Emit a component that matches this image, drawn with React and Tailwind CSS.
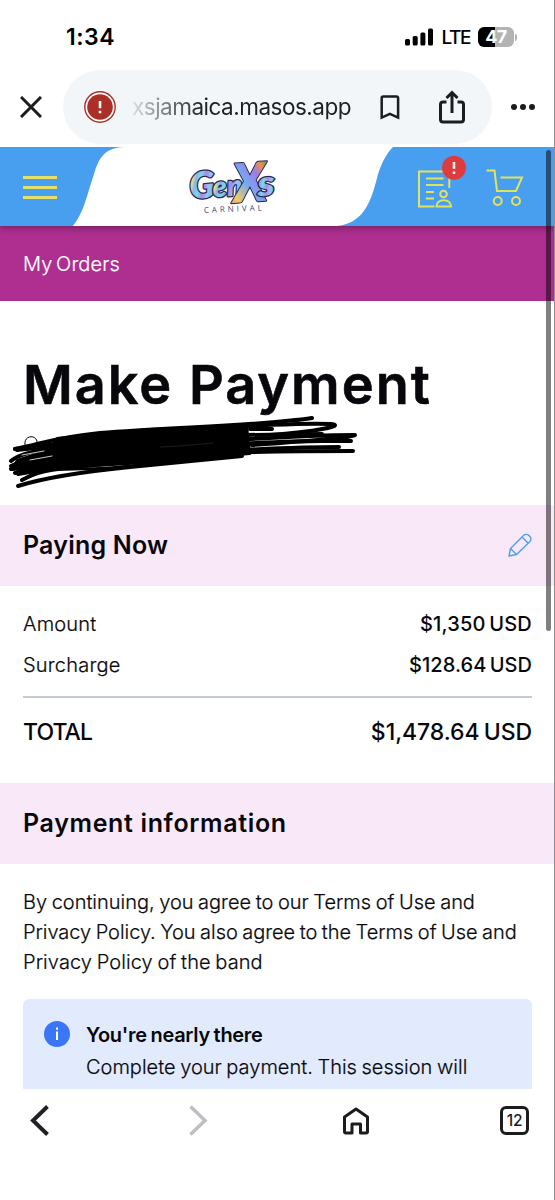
import React from 'react';

const charges = [
  { label: 'Amount', value: '$1,350 USD', labelClass: 'tracking-[0.2px]', valueClass: 'tracking-[0.2px]' },
  { label: 'Surcharge', value: '$128.64 USD', labelClass: 'tracking-[0.2px]', valueClass: 'tracking-[0.05px]' },
];

const StatusBar = () => (
  <div className="flex h-[70px] shrink-0 items-start justify-between pl-[66px] pr-[38px] pt-[23px]">
    <span className="text-[23px] font-semibold leading-[29px] tracking-[0.5px] text-black">1:34</span>
    <div className="flex h-[28px] items-center">
      <svg width="28" height="18" viewBox="0 0 28 18" className="mr-[8px]">
        <rect x="0" y="11" width="5" height="6.5" rx="1.5" />
        <rect x="7.7" y="8" width="5" height="9.5" rx="1.5" />
        <rect x="15.4" y="4.5" width="5" height="13" rx="1.5" />
        <rect x="23" y="0.5" width="5" height="17" rx="1.5" />
      </svg>
      <span className="mr-[8px] text-[19px] font-medium leading-none tracking-[-1.4px] text-black">LTE</span>
      <div className="flex h-[20px] w-[36px] items-center justify-center rounded-[6px] bg-linear-to-r from-black from-47% to-[#b3b3b3] to-47%">
        <span className="text-[18px] font-bold leading-none tracking-[-0.5px] text-white">47</span>
      </div>
      <div className="ml-px h-[7px] w-[2px] rounded-r-full bg-[#b3b3b3]" />
    </div>
  </div>
);

const AddressBar = () => (
  <div className="flex h-[77px] shrink-0 items-start">
    <div className="flex h-[74px] w-[63px] items-center pl-[20px]">
      <svg width="22" height="22" viewBox="0 0 22 22" fill="none" stroke="#1b1c1e" strokeWidth="3">
        <path d="M1 1l20 20M21 1L1 21" />
      </svg>
    </div>
    <div className="flex h-[74px] w-[429px] items-center rounded-full bg-[#f3f6f8] pl-[21px]">
      <svg width="32" height="32" viewBox="0 0 32 32">
        <circle cx="16" cy="16" r="15.2" fill="#fff" stroke="#ab2f26" strokeWidth="1.4" />
        <circle cx="16" cy="16" r="12.8" fill="#ab2f26" />
        <path d="M16 10v7.2M16 19.8v2.4" stroke="#fff" strokeWidth="2.6" />
      </svg>
      <div className="ml-[16px] w-[222px] whitespace-nowrap bg-linear-to-r from-[#dcdfe1] to-[#1f2022] to-32% bg-clip-text text-[22.5px] leading-[30px] tracking-[-0.5px] text-transparent">
        xsjamaica.masos.app
      </div>
      <svg width="20" height="25" viewBox="0 0 20 25" fill="none" stroke="#1b1c1e" strokeWidth="2.5" className="ml-[26px]">
        <path d="M1.7 3a1.5 1.5 0 0 1 1.5-1.5h13.4A1.5 1.5 0 0 1 18.1 3v19.6L9.9 18.8 1.7 22.6z" />
      </svg>
      <svg width="26" height="34" viewBox="0 0 26 34" fill="none" stroke="#1b1c1e" strokeWidth="3" className="ml-[39px]">
        <path d="M7.5 12H4a2.5 2.5 0 0 0-2.5 2.5V29.5A2.5 2.5 0 0 0 4 32h18a2.5 2.5 0 0 0 2.5-2.5v-15A2.5 2.5 0 0 0 22 12h-3.5M13 23V3M7.5 8L13 2.5 18.5 8" />
      </svg>
    </div>
    <div className="flex h-[74px] items-center gap-[3.5px] pl-[19px]">
      <div className="size-[5.7px] rounded-full bg-[#1b1c1e]" />
      <div className="size-[5.7px] rounded-full bg-[#1b1c1e]" />
      <div className="size-[5.7px] rounded-full bg-[#1b1c1e]" />
    </div>
  </div>
);

const Logo = () => (
  <svg width="96" height="70" viewBox="0 0 96 70" className="ml-[130px] overflow-visible">
    <defs>
      <linearGradient id="foil" x1="0" y1="0" x2="1" y2="0.5">
        <stop offset="0" stopColor="#5fb4e8" />
        <stop offset="0.16" stopColor="#d9d5ef" />
        <stop offset="0.25" stopColor="#f4e77d" />
        <stop offset="0.38" stopColor="#8fb2f0" />
        <stop offset="0.52" stopColor="#74dbe2" />
        <stop offset="0.68" stopColor="#a887e6" />
        <stop offset="0.84" stopColor="#9bc0f3" />
        <stop offset="1" stopColor="#6ac7ea" />
      </linearGradient>
      <linearGradient id="foilX" x1="0" y1="1" x2="1" y2="0">
        <stop offset="0" stopColor="#ec67b2" />
        <stop offset="0.2" stopColor="#f3cc62" />
        <stop offset="0.45" stopColor="#74a9f2" />
        <stop offset="0.65" stopColor="#9c7de4" />
        <stop offset="0.78" stopColor="#ef8d4b" />
        <stop offset="0.9" stopColor="#44a557" />
        <stop offset="1" stopColor="#403078" />
      </linearGradient>
    </defs>
    <g transform="rotate(-4 45 30)" fontStyle="italic" fontWeight="800" stroke="#292653" strokeLinejoin="round" paintOrder="stroke" fontFamily="Lato">
      <text x="2" y="47" fontSize="37" textLength="25" lengthAdjust="spacingAndGlyphs" strokeWidth="2.5" fill="url(#foil)">G</text>
      <text x="25" y="47" fontSize="29" textLength="30" lengthAdjust="spacingAndGlyphs" strokeWidth="2.5" fill="url(#foil)">en</text>
      <text x="45" y="54" fontSize="54" textLength="34" lengthAdjust="spacingAndGlyphs" strokeWidth="2" fill="url(#foilX)">X</text>
      <text x="70" y="49" fontSize="35" textLength="17" lengthAdjust="spacingAndGlyphs" strokeWidth="2.5" fill="url(#foil)">s</text>
    </g>
    <text x="17" y="64" fontSize="8" fontWeight="500" textLength="58" fill="#4b4770" fontFamily="Open Sans" transform="rotate(-2.5 17 64)">CARNIVAL</text>
  </svg>
);

const SiteHeader = () => (
  <div className="relative z-10 flex h-[79px] shrink-0 items-start shadow-[0_2px_7px_rgba(0,0,0,0.35)]">
    <svg width="555" height="79" viewBox="0 0 555 79" className="absolute inset-0 -z-10">
      <rect width="555" height="79" fill="#fff" />
      <path d="M0 0H124C104 1 99 11 94 27C86 51 84 65 73 79H0z" fill="#489ff0" />
      <path d="M555 0H393C386 7 380 18 376 35C370 57 362 77 336 79H555z" fill="#489ff0" />
    </svg>
    <div className="ml-[23px] mt-[29px] flex w-[34px] flex-col gap-[7px]">
      <div className="h-[3px] bg-[#e3df68]" />
      <div className="h-[3px] bg-[#e3df68]" />
      <div className="h-[3px] bg-[#e3df68]" />
    </div>
    <div className="mt-[2px]">
      <Logo />
    </div>
    <svg width="50" height="56" viewBox="0 0 50 56" fill="none" stroke="#e3e25f" strokeWidth="2" className="ml-[134px] mt-[8px]">
      <path d="M17.5 51.5H2V16.5H32.3V33M9 23.5H26.5M9 30H26.5M9 37H17M9 43.5H17" />
      <circle cx="26.5" cy="39" r="3.3" />
      <path d="M19.5 51.5C19 43 34.5 43 34 51.5z" />
      <circle cx="37" cy="12.8" r="12" fill="#de3b3e" stroke="none" />
      <path d="M37 7V13.8M37 16.5V19" stroke="#fff" strokeWidth="2.5" />
    </svg>
    <svg width="38" height="38" viewBox="0 0 38 38" fill="none" stroke="#e3e25f" strokeWidth="2" className="ml-[19px] mt-[22px]">
      <path d="M0.5 1.5H8.5L11 22H30L36 8.5H14.5" />
      <circle cx="11.7" cy="32" r="4" />
      <circle cx="30" cy="32" r="4" />
    </svg>
  </div>
);

const Scribble = () => (
  <svg width="370" height="80" viewBox="0 412 370 80" fill="none" stroke="#000" strokeWidth="4" strokeLinecap="round" strokeLinejoin="round">
    <path d="M25 445C23 434 39 434 37 444" strokeWidth="1" />
    <path d="M48 450L57 438 105 433 150 429 210 427 247 425 250 454 190 459 118 464 80 467 45 469 13 468 17 460z" fill="#000" strokeWidth="2" />
    <path d="M15 449C42 444 51 438 100 433C170 427 260 426 312 418" />
    <path d="M15 449C60 443 120 437 180 431C245 425 310 423 330 424C348 425 315 432 270 435" />
    <path d="M17 450L71 444M250 429H272M245 435L322 434" />
    <path d="M11 461C24 449 68 446 115 446C220 443 275 435 355 435C350 438 320 440 252 445" />
    <path d="M11 466C40 452 70 450 130 449C200 447 260 441 322 441H351" />
    <path d="M11 469C40 456 90 457 160 454C230 451 280 447 339 447" />
    <path d="M15 473C55 460 110 459 180 455C250 451 300 451 353 451" />
    <path d="M12 469L44 466 18 474C50 468 90 465 128 463L238 455" />
    <path d="M22 480C55 463 80 472 120 467L235 456" strokeWidth="3" />
    <path d="M22 480L36 473M18 486C50 476 90 471 130 467L242 456" />
    <path d="M160 447C185 446 200 444 213 443" stroke="#333" strokeWidth="0.6" />
    <path d="M22 455L44 451M30 460L52 456" stroke="#fff" strokeWidth="0.8" />
  </svg>
);

const SectionTitle = ({ title, className, children }) => (
  <div className="flex h-[81px] shrink-0 items-center justify-between bg-[#f9e9f8] px-[23px]">
    <h2 className={`-mt-[2px] text-[25px] font-semibold leading-[32px] ${className}`}>{title}</h2>
    {children}
  </div>
);

const PencilIcon = () => (
  <svg width="24" height="24" viewBox="0 0 24 24" fill="none" stroke="#489ff0" strokeWidth="1.4" strokeLinejoin="round" className="-mt-[2px]">
    <path d="M1 23L2.5 15.5 15.5 2.5C19-1 26 5 21.5 9L8.5 21.5zM2.5 15.5L8.5 21.5M14 4L20 10" />
  </svg>
);

const BottomBar = () => (
  <div className="flex h-[111px] shrink-0 items-start bg-white">
    <svg width="20" height="32" viewBox="0 0 20 32" fill="none" stroke="#202124" strokeWidth="4" className="ml-[30px] mt-[16px]">
      <path d="M17.5 1.5L3 15.5 17.5 29.5" />
    </svg>
    <svg width="20" height="32" viewBox="0 0 20 32" fill="none" stroke="#bdbfc3" strokeWidth="3.5" className="ml-[138px] mt-[16px]">
      <path d="M2.5 1.5L17 15.5 2.5 29.5" />
    </svg>
    <svg width="26" height="28" viewBox="0 0 26 28" fill="none" stroke="#1b1c1e" strokeWidth="3" strokeLinejoin="round" className="ml-[135px] mt-[18px]">
      <path d="M1.5 10L13 2 24.5 10V24.5A1.5 1.5 0 0 1 23 26H17.5V17H9V26H3A1.5 1.5 0 0 1 1.5 24.5z" />
    </svg>
    <div className="ml-[131px] mt-[17px] flex size-[29px] items-center justify-center rounded-[6px] border-3 border-[#1b1c1e] text-[15.5px] font-medium leading-none tracking-[-0.3px] text-[#1b1c1e]">
      12
    </div>
  </div>
);

export default function App() {
  return (
    <div className="relative flex h-[1200px] w-[555px] flex-col overflow-hidden bg-white font-['Inter',sans-serif] text-[#08080c]">
      <StatusBar />
      <AddressBar />
      <main className="flex h-[942px] shrink-0 flex-col overflow-hidden">
        <SiteHeader />
        <div className="flex h-[75px] shrink-0 items-center bg-[#ae2f90] pl-[23px] pt-px text-[20px] font-light text-white">
          <span className="tracking-[0.1px] [word-spacing:-2px] [-webkit-text-stroke:0.2px]">My Orders</span>
        </div>
        <div className="flex h-[204px] shrink-0 flex-col">
          <h1 className="mt-[48px] h-[63px] whitespace-nowrap pl-[23px] text-[54px] font-semibold leading-[71px] tracking-[2px] [-webkit-text-stroke:0.6px]">
            Make Payment
          </h1>
          <Scribble />
        </div>
        <SectionTitle title="Paying Now" className="tracking-[0.2px]">
          <PencilIcon />
        </SectionTitle>
        <div className="mx-[23px] h-[197px] shrink-0 pt-[17px]">
          {charges.map((row) => (
            <div key={row.label} className="flex h-[41.5px] items-center justify-between text-[20px]">
              <span className={`font-light [-webkit-text-stroke:0.2px] ${row.labelClass}`}>{row.label}</span>
              <span className={`font-medium [word-spacing:-2px] ${row.valueClass}`}>{row.value}</span>
            </div>
          ))}
          <div className="mt-[10px] border-t-2 border-[#c4cbd2]" />
          <div className="mt-[18px] flex h-[32px] items-center justify-between text-[23px] font-medium">
            <span className="tracking-[-0.9px]">TOTAL</span>
            <span className="tracking-[-0.05px] [word-spacing:-2px]">$1,478.64 USD</span>
          </div>
        </div>
        <SectionTitle title="Payment information" className="tracking-[0.65px]" />
        <p className="ml-[23px] mt-[23px] shrink-0 whitespace-nowrap text-[20px] font-light leading-[30px] [word-spacing:-1px] [-webkit-text-stroke:0.2px]">
          <span className="block tracking-[-0.02px]">By continuing, you agree to our Terms of Use and</span>
          <span className="block tracking-[-0.05px]">Privacy Policy. You also agree to the Terms of Use and</span>
          <span className="block tracking-[0.08px]">Privacy Policy of the band</span>
        </p>
        <div className="mx-[23px] mt-[22px] flex h-[160px] shrink-0 rounded-[6px] bg-[#e2ebfd] pl-[21px] pt-[20px]">
          <svg width="26" height="26" viewBox="0 0 26 26" className="mt-[2px]">
            <circle cx="13" cy="13" r="13" fill="#3b76f6" />
            <path d="M13 10.5V19M13 6.5V8.8" stroke="#fff" strokeWidth="2" />
          </svg>
          <div className="ml-[16px] whitespace-nowrap text-[20px] [word-spacing:-1px]">
            <p className="font-semibold leading-[32px] tracking-[-0.3px]">You're nearly there</p>
            <p className="font-light leading-[33px] [-webkit-text-stroke:0.2px]">Complete your payment. This session will</p>
          </div>
        </div>
      </main>
      <BottomBar />
      <div className="absolute left-[546px] top-[150px] z-20 h-[481px] w-[5px] rounded-full bg-black/50" />
      <div className="absolute right-0 top-0 z-20 h-full w-px bg-[#8f8f8f]" />
    </div>
  );
}
